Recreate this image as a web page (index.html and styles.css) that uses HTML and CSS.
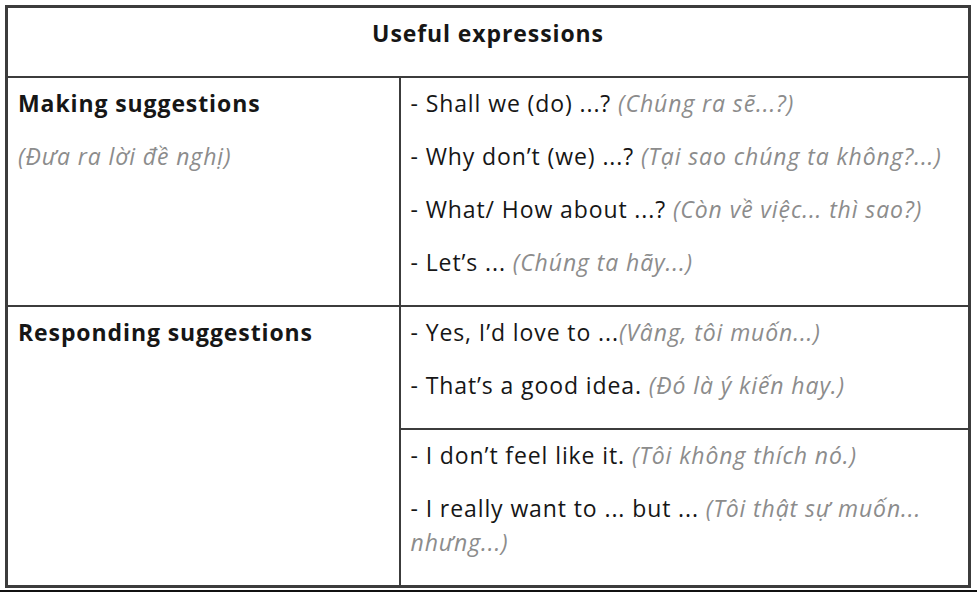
FILE: index.html
```html
<!DOCTYPE html>
<html lang="vi">
<head>
<meta charset="utf-8">
<title>Useful expressions</title>
<link rel="stylesheet" href="styles.css">
</head>
<body>
<table class="expr">
  <colgroup><col class="c1"><col class="c2"></colgroup>
  <tr>
    <th colspan="2"><p>Useful expressions</p></th>
  </tr>
  <tr>
    <td>
      <p><b>Making suggestions</b></p>
      <p><i class="vi">(Đưa ra lời đề nghị)</i></p>
    </td>
    <td>
      <p>- Shall we (do) ...? <i class="vi">(Chúng ra sẽ...?)</i></p>
      <p>- Why don’t (we) ...? <i class="vi">(Tại sao chúng ta không?...)</i></p>
      <p>- What/ How about ...? <i class="vi">(Còn về việc... thì sao?)</i></p>
      <p>- Let’s ... <i class="vi">(Chúng ta hãy...)</i></p>
    </td>
  </tr>
  <tr>
    <td rowspan="2">
      <p><b>Responding suggestions</b></p>
    </td>
    <td>
      <p>- Yes, I’d love to ...<i class="vi">(Vâng, tôi muốn...)</i></p>
      <p>- That’s a good idea. <i class="vi">(Đó là ý kiến hay.)</i></p>
    </td>
  </tr>
  <tr>
    <td>
      <p>- I don’t feel like it. <i class="vi">(Tôi không thích nó.)</i></p>
      <p>- I really want to ... but ... <i class="vi">(Tôi thật sự muốn... nhưng...)</i></p>
    </td>
  </tr>
</table>
<div class="edge"></div>
</body>
</html>
```

FILE: styles.css
```css
html, body {
  margin: 0;
  background: #fff;
}
body {
  padding: 5px 5px 0 5px;
  font-family: "Open Sans", "Noto Sans", sans-serif;
  font-size: 23px;
  letter-spacing: 0.9px;
  line-height: 34px;
  color: #161616;
}
.expr {
  width: 966px;
  border-collapse: collapse;
  border: 3px solid #3c3c3c;
  table-layout: fixed;
}
.c1 { width: 393px; }
.expr th, .expr td {
  border: 2px solid #3c3c3c;
  padding: 8px 10px 7px 10px;
  vertical-align: top;
  text-align: left;
}
.expr th {
  text-align: center;
  font-weight: 700;
}
.expr p {
  margin: 0 0 19px 0;
}
.expr b {
  font-weight: 700;
}
.vi {
  color: #8c8c8c;
  font-style: italic;
}
.edge {
  height: 2px;
  margin-top: 2px;
  background: #111;
  margin-left: -5px;
  margin-right: -5px;
}
```
